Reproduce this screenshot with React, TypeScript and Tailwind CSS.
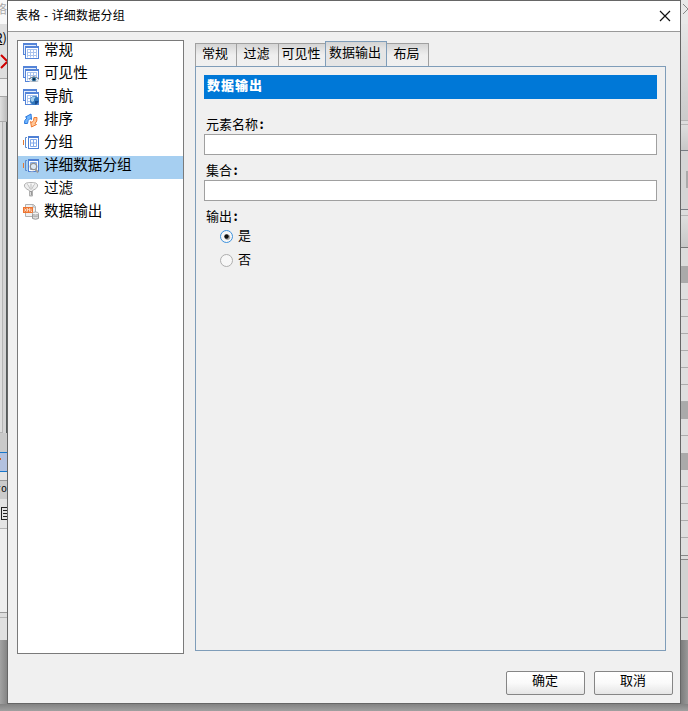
import type { ReactNode } from "react";
import { clsx } from "clsx";

function TableBase({ children }: { children?: ReactNode }) {
  return (
    <svg width="16" height="16" viewBox="0 0 16 16" className="shrink-0">
      <rect x=".5" y=".5" width="13" height="11" fill="#e4edfa" stroke="#5484d8" />
      <rect x="0" y="0" width="14" height="2" fill="#5484d8" />
      <rect x="2.500" y="3.500" width="13" height="12" fill="#fff" stroke="#5484d8" />
      <rect x="2" y="3" width="14" height="2" fill="#5484d8" />
      <path d="M4.500 6v8.500M7.500 6v8.500M10.500 6v8.500M13.500 6v8.500M4 6.500h10M4 9.500h10M4 12.500h10" stroke="#a9c3ee" fill="none" />
      {children}
    </svg>
  );
}

function EyeIcon() {
  return (
    <TableBase>
      <path d="M5.500 13.500Q11 7.500 16 13.500V16H7Z" fill="#edf2f8" />
      <path d="M6 13.200Q11 8.500 16 13.200" fill="none" stroke="#59646f" />
      <circle cx="11" cy="13.300" r="2.300" fill="#397fb2" />
      <circle cx="11" cy="13.300" r="1.200" fill="#102b43" />
      <path d="M7 15q4 1.500 8 0" fill="none" stroke="#9aa4ae" strokeWidth=".8" />
    </TableBase>
  );
}

function GlobeIcon() {
  return (
    <TableBase>
      <circle cx="11.500" cy="11.500" r="4.500" fill="#3277bd" />
      <path d="M7.500 11q.5-3.500 4-3.500l1 1-1.500 1.500v2l-2 1z" fill="#a5d0ef" />
      <path d="M12 12h3.500l-1.500 3-2 .500z" fill="#174a8c" />
    </TableBase>
  );
}

function SortIcon() {
  return (
    <svg width="16" height="16" viewBox="0 0 16 16" className="shrink-0">
      <path d="M1.500 11.500Q1 8 4 6L2.500 5 8 2l.5 5.500-1.500-1Q4.500 8 4.500 11.500Z" fill="#72b8ff" stroke="#2c78dd" />
      <path d="M11 5.500h3q.5 4-2 6l1.500 1-5 2.500-1-5.500 1.500 1Q11 9 11 5.500Z" fill="#ffc899" stroke="#f07a32" />
    </svg>
  );
}

function GroupIcon({ detail = false }: { detail?: boolean }) {
  return (
    <svg width="16" height="16" viewBox="0 0 16 16" className="shrink-0">
      <path d="M.5 5v5" stroke="#e17a35" />
      <path d="M4 2.500H2.500v10H4" fill="none" stroke="#5c8acc" />
      <rect x="5.500" y="1.500" width="10" height="12" fill="#fff" stroke="#4e80d5" />
      <path d="M5 2h11" stroke="#4e80d5" strokeWidth="2" />
      <path d="M7.500 4.500h6v7h-6zM10.500 4v8M7 8h7" fill="none" stroke="#82a9ea" />
      {detail && (
        <>
          <circle cx="10.500" cy="8.500" r="3.200" fill="#dce8f4" stroke="#929292" strokeWidth="1.300" />
          <path d="M12.500 11.500l2.700 3" stroke="#9d9d9d" strokeWidth="2" />
          <path d="M7.500 14h3" stroke="#bbc3cc" />
        </>
      )}
    </svg>
  );
}

function FilterIcon() {
  return (
    <svg width="16" height="16" viewBox="0 0 16 16" className="shrink-0">
      <path d="M1.500 3.500Q2 1.500 8 1.500T14.500 3.500Q15.500 7 9.500 9.500v5.500h-3V9.500Q.5 7 1.500 3.500Z" fill="#eee" stroke="#b0b0b0" />
      <path d="M4.500 3l3 5.500M11.500 3l-3 5.500M8 3v5" fill="none" stroke="#c2c2c2" />
      <path d="M5.500 3h1M9.500 3h1" stroke="#fff" strokeWidth="2" />
      <path d="M8 10v4.500" stroke="#999" strokeWidth="2" />
      <path d="M7.500 11v3" stroke="#ddd" />
    </svg>
  );
}

function OutputIcon() {
  return (
    <svg width="16" height="16" viewBox="0 0 16 16" className="shrink-0">
      <path d="M2.500 12.500V.5h8l2 2v10z" fill="#f1f1f1" stroke="#b0b0b0" />
      <path d="M10 1v2h2" fill="none" stroke="#b0b0b0" />
      <rect x="0" y="3" width="10" height="6" fill="#ee7430" />
      <path d="M1.500 4.500l2 3m0-3l-2 3M4.500 7.500v-3l1 1 1-1v3M8 4.500v3h1" fill="none" stroke="#fff3e4" strokeWidth=".8" />
      <path d="M9.500 9.500v5q3 1.500 6 0v-5" fill="#ddd" stroke="#999" />
      <ellipse cx="12.500" cy="9.500" rx="3" ry="1.500" fill="#f4f4f4" stroke="#aaa" />
      <path d="M10 12q2.500 1 5 0" fill="none" stroke="#aaa" />
    </svg>
  );
}

const items = [
  { label: "常规", icon: <TableBase /> },
  { label: "可见性", icon: <EyeIcon /> },
  { label: "导航", icon: <GlobeIcon /> },
  { label: "排序", icon: <SortIcon /> },
  { label: "分组", icon: <GroupIcon /> },
  { label: "详细数据分组", icon: <GroupIcon detail />, active: true },
  { label: "过滤", icon: <FilterIcon /> },
  { label: "数据输出", icon: <OutputIcon /> },
];

const tabs = [
  { label: "常规", width: "w-[41px]" },
  { label: "过滤", width: "w-[42px]" },
  { label: "可见性", width: "w-[47px]" },
  { label: "数据输出", width: "w-[62px]", active: true },
  { label: "布局", width: "w-[42px]" },
];

export default function App() {
  return (
    <div className="flex h-[711px] w-[688px] flex-col overflow-hidden bg-[#999] font-['Noto_Sans_CJK_SC','Liberation_Sans',sans-serif] text-black">
      <div className="flex h-[704px]">
        <LeftEdge />
        <div className="flex w-[674px] flex-col border border-[#666] bg-[#f0f0f0]">
          <header className="flex h-[31px] shrink-0 items-center justify-between border-b border-[#999] bg-white pl-2 pr-[9px] text-xs">
            <span className="font-['Liberation_Sans','Noto_Sans_CJK_SC',sans-serif] leading-4 tracking-[0.2px]">表格 - 详细数据分组</span>
            <svg width="12" height="12" viewBox="0 0 12 12" className="mb-px">
              <path d="M1 1l10 10M11 1L1 11" stroke="#111" strokeWidth="1.200" />
            </svg>
          </header>
          <main className="flex h-[622px] pl-[9px] pt-2">
            <ul className="h-[614px] w-[167px] border border-[#7a7a7a] bg-white">
              {items.map((item) => (
                <li key={item.label} className={clsx("flex h-[23px] items-start gap-[5px] pl-[5px] text-[14.600px]", item.active && "bg-[#a6cff1]")}>
                  <span className="mt-[2px]">{item.icon}</span>
                  <span className="whitespace-nowrap leading-[16px]">{item.label}</span>
                </li>
              ))}
            </ul>
            <section className="ml-[11px] flex w-[471px] flex-col">
              <Tabs />
              <OutputPanel />
            </section>
          </main>
          <footer className="flex justify-end gap-[9px] pr-[7px] pt-[17px]">
            <DialogButton>确定</DialogButton>
            <DialogButton>取消</DialogButton>
          </footer>
        </div>
        <RightEdge />
      </div>
      <div className="h-[7px] bg-gradient-to-b from-[#828282] to-[#a0a0a0]" />
    </div>
  );
}

function Tabs() {
  return (
    <div className="mt-px -mb-px flex h-[26px] items-end text-[13px]">
      {tabs.map((tab, i) => (
        <div
          key={tab.label}
          className={clsx(
            "flex shrink-0 justify-center whitespace-nowrap border-t pr-[2px]",
            tab.width,
            tab.active
              ? "h-[26px] border-x border-[#7f9db9] border-b border-b-[#f8f8f8] bg-gradient-to-b from-[#d3d3d3] via-[#e5e5e5] via-30% to-[#e5e5e5] leading-[20px]"
              : "h-[24px] border-l border-b border-[#a0a0a0] border-b-[#7f9db9] bg-gradient-to-b from-[#d5d5d5] via-[#efefef] via-50% to-[#f0f0f0] leading-[17px]",
            i === tabs.length - 1 && "border-l-0 border-r",
          )}
        >
          {tab.label}
        </div>
      ))}
    </div>
  );
}

function OutputPanel() {
  return (
    <div className="h-[585px] border border-[#7f9db9] px-2 pt-2">
      <h2 className="h-6 bg-[#0078d7] pl-[3px] text-[13px] font-black leading-[19px] tracking-[1px] text-white">数据输出</h2>
      <FieldLabel className="mt-[16px]">元素名称</FieldLabel>
      <input className="block h-[21px] w-full border border-[#a0a0a0] bg-white outline-none" />
      <FieldLabel className="mt-[6px]">集合</FieldLabel>
      <input className="block h-[21px] w-full border border-[#a0a0a0] bg-white outline-none" />
      <FieldLabel className="mt-[6px]">输出</FieldLabel>
      <div className="flex flex-col pl-4">
        <Radio label="是" checked />
        <Radio label="否" />
      </div>
    </div>
  );
}

function FieldLabel({ children, className }: { children: ReactNode; className?: string }) {
  return (
    <div className={clsx("flex h-[19px] pl-[2px] text-[13px] leading-[18px]", className)}>
      {children}
      <span className="w-[7px] text-center font-bold">:</span>
    </div>
  );
}

function Radio({ label, checked = false }: { label: string; checked?: boolean }) {
  return (
    <label className="flex h-6 gap-[5px] text-[13px] leading-[18px]">
      <svg width="13" height="13" viewBox="0 0 13 13" className="mt-[4px]">
        <circle cx="6.500" cy="6.500" r="6" fill="#f7f7f7" stroke={checked ? "#3c91dc" : "#adadad"} />
        {checked && <circle cx="7.500" cy="7.300" r="2.700" fill="#aaa" />}
        {checked && <circle cx="6.500" cy="6.500" r="2.200" fill="#101010" />}
      </svg>
      {label}
    </label>
  );
}

function DialogButton({ children }: { children: ReactNode }) {
  return (
    <button className="flex h-6 w-[79px] justify-center rounded-[2px] border border-[#858585] bg-gradient-to-b from-white via-[#fafafa] to-[#e5e5e5] pr-px text-[13px] leading-[15px]">
      {children}
    </button>
  );
}

// Slices of the windows that sit behind the dialog
function LeftEdge() {
  return (
    <div className="flex w-[7px] shrink-0 flex-col overflow-hidden bg-[#f5f5f5]">
      <div className="flex h-[24px] shrink-0 justify-end bg-[#f8f8f8] text-[12px] leading-[17px] text-[#aaa]">络</div>
      <div className="flex h-[27px] shrink-0 justify-end bg-[#dedede] text-[13px] leading-[27px]"><span className="underline">R</span>)</div>
      <div className="flex h-[27px] shrink-0 items-start bg-[#dedede] pt-[3px]">
        <svg width="7" height="16" viewBox="0 0 7 16">
          <path d="M1 1l6 6M1 14l6-6" stroke="#d00000" strokeWidth="2" />
        </svg>
      </div>
      <div className="h-[19px] shrink-0 border-y border-[#a5a5a5] bg-[#eee]" />
      <div className="h-[24px] shrink-0 bg-gradient-to-r from-[#e0e0e0] to-[#bbb]" />
      <div className="flex h-[312px] shrink-0 justify-between border-t border-[#aaa] bg-[#d4d4d4]">
        <div className="w-[3px] border-r border-b border-[#b5b5b5] bg-[#dedede]" />
        <div className="w-px bg-[#555b5b]" />
      </div>
      <div className="h-[19px] shrink-0 bg-[#c9c9c9]" />
      <div className="h-[20px] shrink-0 border-y border-[#1677cc] bg-[#b2c1df]">
        <div className="mt-[5px] h-[2px] w-px bg-[#d56021]" />
      </div>
      <div className="h-[8px] shrink-0 bg-[#e4e4e4]" />
      <div className="flex h-[19px] shrink-0 justify-end border-t border-[#999] bg-[#cbcbcb] font-['Liberation_Mono',monospace] text-[10px] leading-[17px]">ro</div>
      <div className="flex h-[30px] shrink-0 border-b border-[#b4b4b4] bg-[#e4e4e4] pl-px pt-[8px]">
        <svg width="6" height="13" viewBox="0 0 6 13">
          <path d="M.5 0v13M0 .5h6M0 12.500h6M2 3.500h4M2 6.500h4M2 9.500h4" stroke="#222" />
        </svg>
      </div>
      <div className="h-[84px] shrink-0 border-b border-[#999] bg-[#eee]" />
      <div className="h-[5px] shrink-0 border-b border-[#b5b5b5] bg-[#ddd]" />
      <div className="h-[22px] shrink-0 bg-[#e0e0e0]" />
      <div className="h-[64px] shrink-0 bg-gradient-to-r from-[#a3a3a3] to-[#858585]" />
    </div>
  );
}

function RightEdge() {
  return (
    <div className="flex w-[7px] shrink-0 flex-col overflow-hidden bg-[#e0e0e0]">
      <div className="flex h-[24px] shrink-0 items-start bg-[#e8e8e8] pl-[2px] pt-[3px]">
        <svg width="5" height="12" viewBox="0 0 5 12">
          <path d="M0 1l5 5-5 5" fill="none" stroke="#888" />
        </svg>
      </div>
      <div className="h-[97px] shrink-0 border-b border-[#b5b5b5] bg-gradient-to-b from-[#e6e6e6] to-[#cbcbcb]" />
      <div className="h-[4px] shrink-0 border-b border-[#b8b8b8] bg-[#ddd]" />
      <div className="h-[26px] shrink-0 border-b border-[#777d83] bg-gradient-to-b from-[#dedede] to-[#c8c8c8]" />
      <div className="flex h-[59px] shrink-0 justify-end border-b border-[#777d83] bg-[#d5d5d5] pt-[20px]">
        <div className="h-[17px] w-[2px] bg-[#aaa]" />
      </div>
      <div className="h-[6px] shrink-0 border-b border-[#b5b5b5] bg-[#ddd]" />
      <div className="h-[32px] shrink-0 border-b border-[#777] bg-gradient-to-b from-[#dedede] to-[#c8c8c8]" />
      <div className="h-[18px] shrink-0 bg-[#dcdcdc]" />
      <div className="h-[17px] shrink-0 bg-[#aaa]" />
      {Array.from({ length: 7 }, (_, i) => (
        <div key={i} className="h-[17px] shrink-0 border-b border-[#adadad] bg-[#dfdfdf]" />
      ))}
      <div className="h-[17px] shrink-0 bg-[#aaa]" />
      <div className="h-[17px] shrink-0 border-b border-[#adadad] bg-[#dfdfdf]" />
      <div className="h-[17px] shrink-0 bg-[#dfdfdf]" />
      <div className="h-[17px] shrink-0 bg-[#aaa]" />
      {Array.from({ length: 4 }, (_, i) => (
        <div key={i} className="h-[17px] shrink-0 border-b border-[#adadad] bg-[#dfdfdf]" />
      ))}
      <div className="h-[18px] shrink-0 border-b border-[#888] bg-[#dfdfdf]" />
      <div className="h-[4px] shrink-0 border-b border-[#888] bg-[#ddd]" />
      <div className="h-[58px] shrink-0 border-b border-[#888] bg-[#d2d2d2]" />
      <div className="h-[22px] shrink-0 bg-[#d8d8d8]" />
      <div className="h-[64px] shrink-0 bg-gradient-to-r from-[#7c7c7c] to-[#999]" />
    </div>
  );
}
